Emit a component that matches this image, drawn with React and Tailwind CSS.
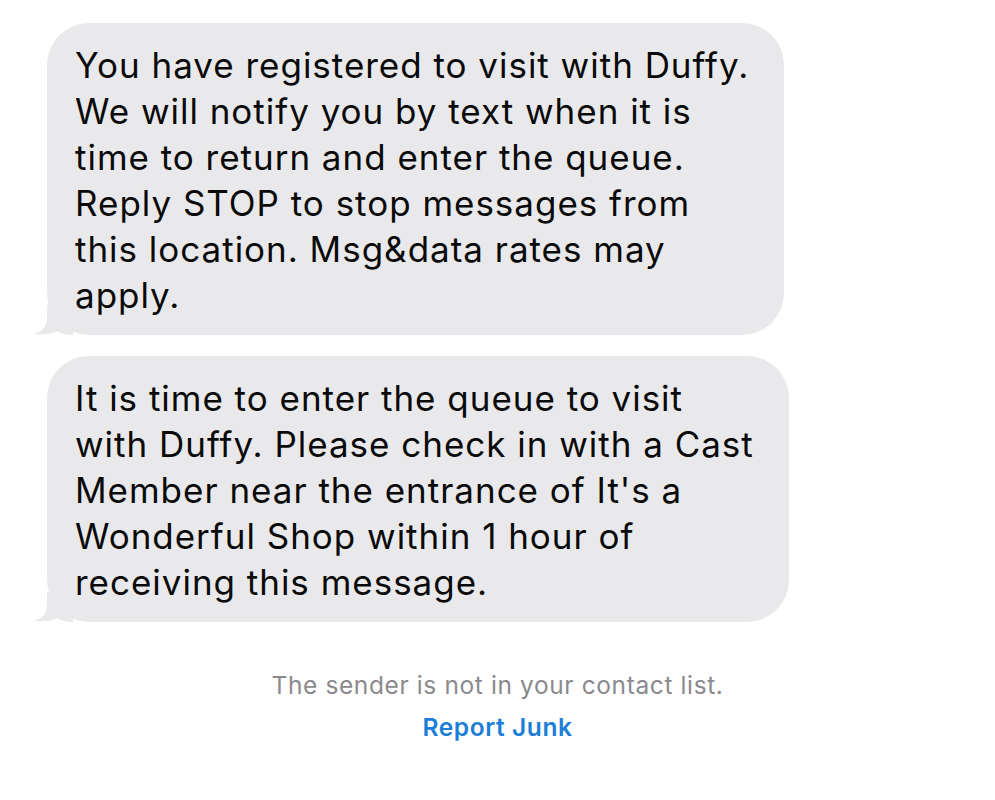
const MESSAGES = [
  {
    width: "w-[737px]",
    lines: [
      "You have registered to visit with Duffy.",
      "We will notify you by text when it is",
      "time to return and enter the queue.",
      "Reply STOP to stop messages from",
      "this location. Msg&data rates may",
      "apply.",
    ],
  },
  {
    width: "w-[742px]",
    lines: [
      "It is time to enter the queue to visit",
      "with Duffy. Please check in with a Cast",
      "Member near the entrance of It's a",
      "Wonderful Shop within 1 hour of",
      "receiving this message.",
    ],
  },
];

function Tail() {
  return (
    <svg
      className="absolute -left-[14px] bottom-0"
      width="40"
      height="30"
      viewBox="0 0 40 30"
    >
      <path
        d="M14 0 L14 14 C14 22 8 27 1 29 C9 30.5 18 29 24 26 C27 28 31 29.5 38 30 L40 30 L40 0 Z"
        fill="#e9e9eb"
      />
    </svg>
  );
}

function Bubble({ msg }) {
  return (
    <div
      className={`relative ${msg.width} bg-[#e9e9eb] rounded-[42px] pl-[28px] pr-6 pt-[19px] pb-[17px]`}
    >
      {msg.lines.map((l, i) => (
        <p
          key={i}
          className="text-[35px] leading-[46px] tracking-[0.028em] text-[#0a0a0a] whitespace-nowrap"
        >
          {l}
        </p>
      ))}
      <Tail />
    </div>
  );
}

export default function App() {
  return (
    <div
      className="w-[995px] h-[800px] bg-white pt-[23px]"
      style={{ fontFamily: "Inter, 'Liberation Sans', sans-serif" }}
    >
      <div className="flex flex-col gap-[21px] pl-[47px]">
        {MESSAGES.map((m, i) => (
          <Bubble key={i} msg={m} />
        ))}
      </div>

      {/* Unknown sender notice */}
      <div className="flex flex-col items-center mt-[48px]">
        <p className="text-[24.5px] leading-[30px] tracking-[0.025em] text-[#8a8a8e]">
          The sender is not in your contact list.
        </p>
        <p className="mt-[12px] text-[24.5px] leading-[30px] tracking-[0.025em] font-semibold text-[#1c7ed6]">
          Report Junk
        </p>
      </div>
    </div>
  );
}
